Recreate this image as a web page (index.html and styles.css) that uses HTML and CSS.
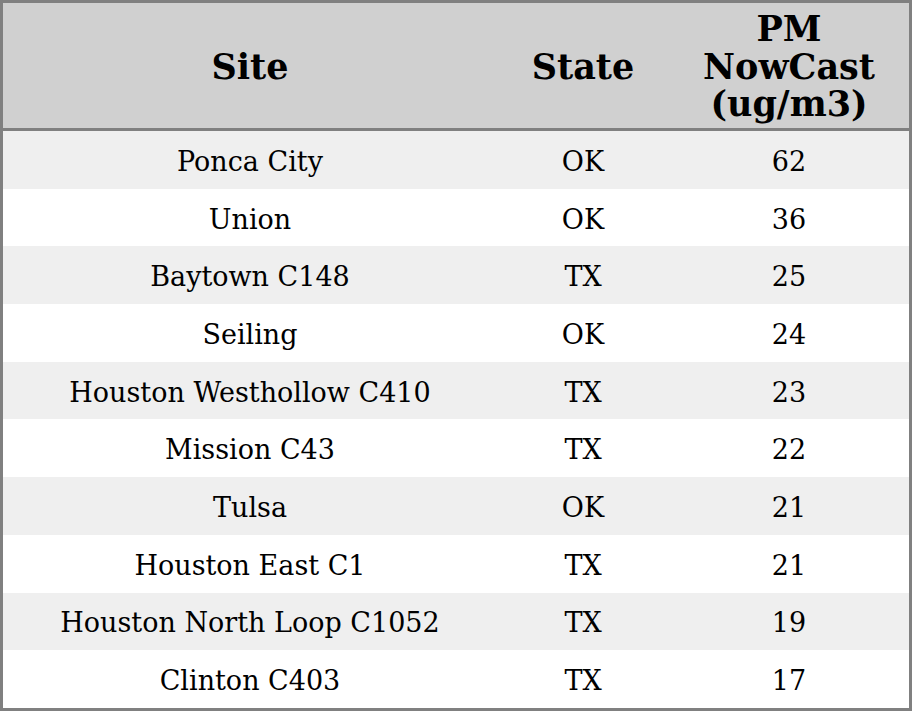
FILE: index.html
```html
<!DOCTYPE html>
<html>
<head>
<meta charset="utf-8">
<link rel="stylesheet" href="styles.css">
</head>
<body>
<table class="aq-table">
  <colgroup>
    <col class="col-site">
    <col class="col-state">
    <col class="col-pm">
  </colgroup>
  <thead>
    <tr class="head-row">
      <th>Site</th>
      <th>State</th>
      <th>PM<br>NowCast<br>(ug/m3)</th>
    </tr>
  </thead>
  <tbody>
    <tr class="odd"><td>Ponca City</td><td>OK</td><td>62</td></tr>
    <tr class="even"><td>Union</td><td>OK</td><td>36</td></tr>
    <tr class="odd"><td>Baytown C148</td><td>TX</td><td>25</td></tr>
    <tr class="even"><td>Seiling</td><td>OK</td><td>24</td></tr>
    <tr class="odd"><td>Houston Westhollow C410</td><td>TX</td><td>23</td></tr>
    <tr class="even"><td>Mission C43</td><td>TX</td><td>22</td></tr>
    <tr class="odd"><td>Tulsa</td><td>OK</td><td>21</td></tr>
    <tr class="even"><td>Houston East C1</td><td>TX</td><td>21</td></tr>
    <tr class="odd"><td>Houston North Loop C1052</td><td>TX</td><td>19</td></tr>
    <tr class="even"><td>Clinton C403</td><td>TX</td><td>17</td></tr>
  </tbody>
</table>
</body>
</html>
```
FILE: styles.css
```css
html, body {
  margin: 0;
  padding: 0;
  background: #ffffff;
}
.aq-table {
  width: 912px;
  height: 711px;
  border-collapse: separate;
  border-spacing: 0;
  border: 3px solid #808080;
  table-layout: fixed;
  font-family: "DejaVu Serif", serif;
  color: #000;
  box-sizing: border-box;
}
.col-site { width: 494px; }
.col-state { width: 172px; }
.col-pm { width: 240px; }
.head-row th {
  box-sizing: border-box;
  background: #d0d0d0;
  font-weight: bold;
  font-size: 35px;
  line-height: 37.5px;
  height: 128px;
  padding: 2px 0 0;
  border-bottom: 3px solid #808080;
  text-align: center;
  vertical-align: middle;
}
tbody td {
  box-sizing: border-box;
  font-size: 27px;
  height: 57.7px;
  padding: 3px 0 0;
  text-align: center;
  vertical-align: middle;
}
tr.odd td { background: #efefef; }
tr.even td { background: #ffffff; }
```
